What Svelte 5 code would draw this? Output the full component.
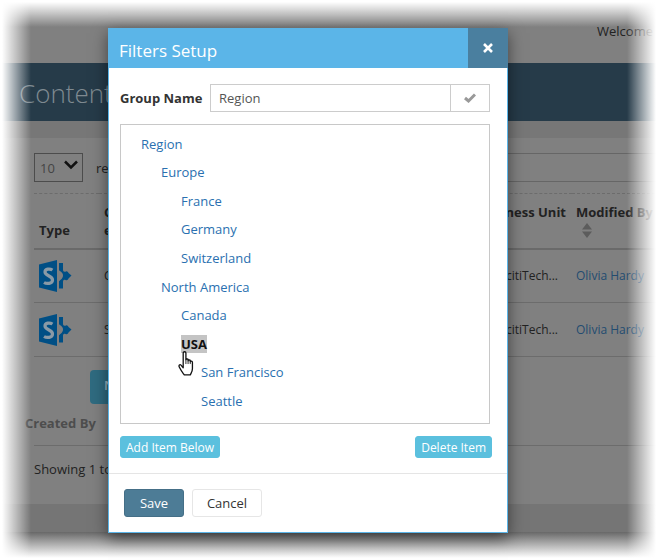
<script>
  const tree = [
    { label: "Region", level: 0 },
    { label: "Europe", level: 1 },
    { label: "France", level: 2 },
    { label: "Germany", level: 2 },
    { label: "Switzerland", level: 2 },
    { label: "North America", level: 1 },
    { label: "Canada", level: 2 },
    { label: "USA", level: 2, selected: true },
    { label: "San Francisco", level: 3 },
    { label: "Seattle", level: 3 },
  ];
  const rows = ["C", "S"];
</script>

{#snippet sharepoint()}
  <svg class="sp" width="33" height="32" viewBox="0 0 33 32">
    <path fill="#004f85" d="M0 4.500 L18 0 V32 L0 27.500 Z" />
    <path fill="#004f85" d="M20 3 H24 V9.500 C24 11.500 25 12 27 11.500 C28 11 29 12 29.500 13 L32.500 15.500 L29.500 18.500 C29 20 28 20.500 26.500 20 C25 19.500 24 20 24 22 V28.500 H20 V21.500 C20 20.500 24 19 24 15.500 C24 12 20 11 20 10 Z" />
    <path fill="none" stroke="#8a9aa6" stroke-width="3.200" d="M13.500 10 C11 8.500 6 8.500 6 12 C6 16 13.500 15.500 13.500 20 C13.500 24 7.500 24 5 22.500" />
  </svg>
{/snippet}

<div class="page">
  <header class="top"><span>Welcome O</span></header>
  <div class="banner"><h1>Content</h1></div>
  <div class="strip"></div>

  <section class="content">
    <div class="controls">
      <div class="select">10 <svg width="16" height="10" viewBox="0 0 16 10"><path d="M2 1.500 L8 7.500 L14 1.500" fill="none" stroke="#111" stroke-width="2.500" /></svg></div>
      <span class="re">re</span>
      <div class="search"></div>
    </div>

    <table>
      <thead>
        <tr>
          <th class="c-type">Type</th>
          <th class="c-name">C<br />e</th>
          <th class="c-unit">ness Unit</th>
          <th class="c-mod">
            Modified By
            <svg class="sort" width="10" height="15" viewBox="0 0 10 15"><path d="M5 0 L10 6.500 H0 Z M5 15 L10 8.500 H0 Z" fill="#5c5c5c" /></svg>
          </th>
        </tr>
      </thead>
      <tbody>
        {#each rows as row}
          <tr>
            <td>{@render sharepoint()}</td>
            <td class="c-name">{row}</td>
            <td class="c-unit">citiTech...</td>
            <td class="c-mod"><a href="#mod">Olivia Hardy</a></td>
          </tr>
        {/each}
      </tbody>
    </table>

    <div class="new">N</div>
    <div class="created">Created By</div>
    <div class="rule"></div>
    <div class="showing">Showing 1 to</div>
  </section>

  <footer class="foot"></footer>

  <div class="fade"></div>
</div>

<div class="modal">
  <div class="m-head">
    <h2>Filters Setup</h2>
    <button class="close" aria-label="Close">
      <svg width="10" height="10" viewBox="0 0 10 10"><path d="M1 1 L9 9 M9 1 L1 9" stroke="#fff" stroke-width="2.600" /></svg>
    </button>
  </div>

  <div class="m-body">
    <div class="group">
      <label for="gname">Group Name</label>
      <div class="field">
        <input id="gname" value="Region" />
        <span class="ok">
          <svg width="12" height="10" viewBox="0 0 12 10"><path d="M1 5 L4.500 8 L11 1.500" fill="none" stroke="#999" stroke-width="3" /></svg>
        </span>
      </div>
    </div>

    <ul class="tree">
      {#each tree as item}
        <li style="padding-left: {item.level * 20}px">
          <a href="#item" class:sel={item.selected}>{item.label}</a>
          {#if item.selected}
            <svg class="hand" width="18" height="25" viewBox="0 0 16 23">
              <path fill="#fff" stroke="#111" stroke-width="1.200" stroke-linejoin="round" d="M4.500 1.800 C4.500 0.300 7 0.300 7 1.800 V8 C7 7 9 7 9 8 V9 C9 8 11 8 11 9 V10 C11 9 13 9 13 10.500 V16 C13 19 12 20 11 22 H5.500 C4 20 3 19 1 15 C0 13 1.500 12 2.500 13 L4.500 15.500 Z" />
              <path stroke="#111" stroke-width="0.800" d="M7 8 V12 M9 9 V12 M11 10 V12" />
            </svg>
          {/if}
        </li>
      {/each}
    </ul>

    <div class="tree-actions">
      <button class="info">Add Item Below</button>
      <button class="info">Delete Item</button>
    </div>
  </div>

  <div class="m-foot">
    <button class="save">Save</button>
    <button class="cancel">Cancel</button>
  </div>
</div>

<style>
  :global(body) {
    margin: 0;
    background: #fff;
    font-family: "Open Sans", sans-serif;
    font-size: 13px;
  }

  .page {
    position: relative;
    width: 660px;
    height: 560px;
    overflow: hidden;
    background: #757575;
    color: #222;
  }

  .top {
    height: 63px;
    background: #808080;
    box-sizing: border-box;
    padding: 22px 0 0 597px;
    white-space: nowrap;
  }

  .banner {
    height: 58px;
    background: #263b49;
    box-sizing: border-box;
    padding-left: 19px;
  }

  h1 {
    margin: 0;
    font-size: 26px;
    font-weight: 300;
    line-height: 60px;
    color: #7f8a91;
  }

  .strip {
    height: 17px;
    background: #777;
  }

  .content {
    height: 366px;
    background: #808080;
    box-sizing: border-box;
    padding: 15px 0 0 34px;
  }

  .controls {
    display: flex;
    align-items: center;
    height: 29px;
  }

  .select {
    width: 49px;
    height: 29px;
    box-sizing: border-box;
    border: 1px solid #4c4c4c;
    display: flex;
    align-items: center;
    justify-content: space-between;
    padding: 0 3px 0 5px;
    color: #444;
    font-size: 13px;
  }

  .select svg {
    margin-top: -5px;
  }

  .re {
    margin-left: 13px;
  }

  .search {
    margin-left: auto;
    width: 160px;
    height: 27px;
    border-top: 1px solid #666;
    border-bottom: 1px solid #666;
  }

  table {
    margin-top: 11px;
    border-top: 1px dashed #6c6c6c;
    border-collapse: collapse;
    width: 626px;
    table-layout: fixed;
  }

  th {
    box-sizing: border-box;
    height: 55px;
    text-align: left;
    font-weight: 700;
    vertical-align: top;
    padding: 7px 5px 0;
    border-bottom: 2px solid #6a6a6a;
    line-height: 22px;
    white-space: nowrap;
    color: #222;
  }

  th.c-type {
    vertical-align: bottom;
    padding: 0 5px 7px;
  }

  th.c-name {
    line-height: 18px;
    padding-top: 9px;
  }

  td {
    box-sizing: border-box;
    height: 54px;
    padding: 0 5px;
    border-bottom: 1px solid #6c6c6c;
    white-space: nowrap;
    font-size: 12px;
  }

  .c-type { width: 65px; }
  .c-name { width: 381px; }
  .c-unit { width: 92px; text-align: right; }
  .c-mod { width: 88px; padding-left: 4px; }

  th.c-unit { padding-right: 6px; }
  td.c-unit { padding-right: 14px; }

  .sort {
    display: block;
    margin: 0 0 0 6px;
  }

  .sp {
    display: block;
  }

  td a {
    color: #234c70;
    text-decoration: none;
  }

  .new {
    margin: 13px 0 0 56px;
    width: 60px;
    height: 34px;
    box-sizing: border-box;
    padding: 6px 0 0 14px;
    background: #2f6b80;
    border-radius: 4px;
    color: #9fb6bf;
    font-weight: 600;
  }

  .created {
    margin: 10px 0 0 -9px;
    font-weight: 700;
    color: #4d4d4d;
    line-height: 18px;
  }

  .rule {
    margin-top: 13px;
    border-top: 1px solid #6c6c6c;
  }

  .showing {
    margin-top: 14px;
    line-height: 18px;
  }

  .foot {
    height: 56px;
  }

  .fade {
    position: absolute;
    inset: 0;
    background:
      linear-gradient(90deg, #fff 2px, rgba(255, 255, 255, 0) 31px) left / 31px 100% no-repeat,
      linear-gradient(270deg, #fff 4px, rgba(255, 255, 255, 0) 33px) right / 33px 100% no-repeat,
      linear-gradient(180deg, #fff 2px, rgba(255, 255, 255, 0) 27px) top / 100% 27px no-repeat,
      linear-gradient(0deg, #fff 2px, rgba(104, 104, 104, 1) 28px) bottom / 100% 28px no-repeat;
  }

  .modal {
    position: absolute;
    left: 108px;
    top: 28px;
    width: 400px;
    height: 505px;
    box-sizing: border-box;
    border: 1px solid #5bb5e8;
    background: #fff;
    box-shadow: 0 5px 15px rgba(0, 0, 0, 0.5);
    color: #333;
    display: flex;
    flex-direction: column;
  }

  .m-head {
    height: 40px;
    margin: -1px -1px 0;
    background: #5bb5e8;
    display: flex;
    justify-content: space-between;
    flex-shrink: 0;
  }

  h2 {
    margin: 0;
    padding-left: 11px;
    font-size: 17px;
    font-weight: 400;
    line-height: 46px;
    color: #fff;
  }

  .close {
    width: 40px;
    border: 0;
    padding: 0;
    background: #4a7f9f;
  }

  .m-body {
    padding: 16px 17px 15px 11px;
    border-bottom: 1px solid #e5e5e5;
  }

  .group {
    display: flex;
    align-items: center;
    justify-content: space-between;
  }

  label {
    font-weight: 700;
    color: #333;
  }

  .field {
    display: flex;
    width: 280px;
    height: 28px;
    box-sizing: border-box;
    border: 1px solid #ccc;
  }

  input {
    flex: 1;
    min-width: 0;
    border: 0;
    outline: 0;
    padding: 0 8px;
    font: inherit;
    color: #555;
  }

  .ok {
    width: 38px;
    border-left: 1px solid #ccc;
    display: flex;
    align-items: center;
    justify-content: center;
  }

  .tree {
    list-style: none;
    margin: 12px 0 0;
    padding: 4.700px 20px 0;
    height: 300px;
    box-sizing: border-box;
    border: 1px solid #c8c8c8;
  }

  .tree li {
    position: relative;
    height: 28.600px;
    line-height: 28px;
  }

  .tree a {
    color: #2a70b0;
    text-decoration: none;
  }

  .tree a.sel {
    background: #c4c4c4;
    color: #111;
    font-weight: 700;
    display: inline-block;
    line-height: 18px;
  }

  .hand {
    position: absolute;
    left: 37px;
    top: 21px;
  }

  .tree-actions {
    display: flex;
    justify-content: space-between;
    margin: 12px -2px 0 0;
  }

  .info {
    height: 22px;
    padding: 0 5px;
    border: 1px solid #5bc0de;
    border-radius: 3px;
    background: #5bc0de;
    color: #fff;
    font: inherit;
    font-size: 12px;
  }

  .m-foot {
    display: flex;
    gap: 8px;
    padding: 15px 15px;
  }

  .save, .cancel {
    height: 28px;
    border-radius: 3px;
    font: inherit;
  }

  .save {
    width: 60px;
    background: #4d7c96;
    border: 1px solid #456f87;
    color: #fff;
  }

  .cancel {
    width: 70px;
    background: #fff;
    border: 1px solid #e6e6e6;
    color: #333;
  }
</style>
